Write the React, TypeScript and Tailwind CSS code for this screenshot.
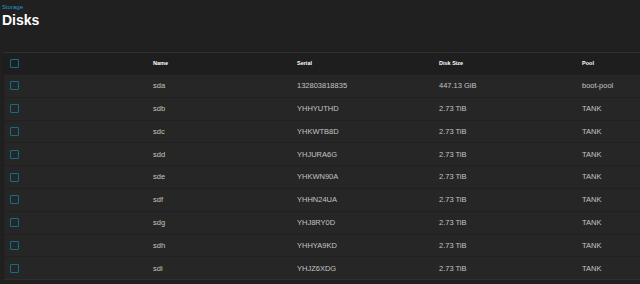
import React from "react"

const disks = [
  { name: "sda", serial: "132803818835", size: "447.13 GiB", pool: "boot-pool" },
  { name: "sdb", serial: "YHHYUTHD", size: "2.73 TiB", pool: "TANK" },
  { name: "sdc", serial: "YHKWTB8D", size: "2.73 TiB", pool: "TANK" },
  { name: "sdd", serial: "YHJURA6G", size: "2.73 TiB", pool: "TANK" },
  { name: "sde", serial: "YHKWN90A", size: "2.73 TiB", pool: "TANK" },
  { name: "sdf", serial: "YHHN24UA", size: "2.73 TiB", pool: "TANK" },
  { name: "sdg", serial: "YHJ8RY0D", size: "2.73 TiB", pool: "TANK" },
  { name: "sdh", serial: "YHHYA9KD", size: "2.73 TiB", pool: "TANK" },
  { name: "sdi", serial: "YHJZ6XDG", size: "2.73 TiB", pool: "TANK" },
]

function Box() {
  return <span className="block w-[9px] h-[9px] border border-[#0f6f86] rounded-[1px]" />
}

export default function App() {
  return (
    <div
      className="w-[640px] h-[284px] overflow-hidden bg-[#202020] text-[#c4c4c4]"
      style={{ fontFamily: '"Liberation Sans", Arial, sans-serif' }}
    >
      {/* Page header */}
      <div className="px-[2px] pt-[3px] h-[52px]">
        <div className="text-[6px] leading-[8px] text-[#1c9bd0]">Storage</div>
        <h1 className="text-[14px] leading-[19px] font-bold text-white">Disks</h1>
      </div>

      {/* Disks table */}
      <div className="ml-[3px] bg-[#262626] border-t border-[#303030] border-l border-b border-l-[#1c1c1c] border-b-[#2e2e2e]">
        <div className="flex items-center h-[21px] bg-[#1e1e1e] text-[5.5px] font-bold text-white">
          <div className="w-[149px] pl-[6px]"><Box /></div>
          <div className="w-[144px]">Name</div>
          <div className="w-[142px]">Serial</div>
          <div className="w-[143px]">Disk Size</div>
          <div className="flex-1">Pool</div>
        </div>
        {disks.map((d) => (
          <div
            key={d.name}
            className="flex items-center h-[22.8px] border-t border-[#212121] text-[7.5px]"
          >
            <div className="w-[149px] pl-[6px]"><Box /></div>
            <div className="w-[144px]">{d.name}</div>
            <div className="w-[142px]">{d.serial}</div>
            <div className="w-[143px]">{d.size}</div>
            <div className="flex-1">{d.pool}</div>
          </div>
        ))}
      </div>
    </div>
  )
}
